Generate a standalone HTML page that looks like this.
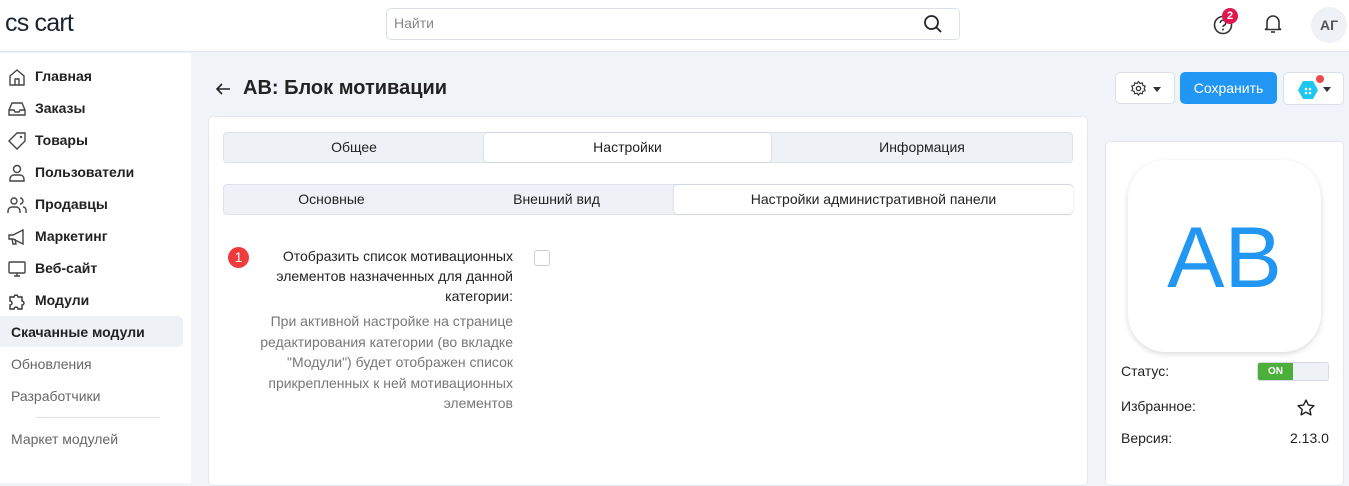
<!DOCTYPE html><html><head><meta charset="utf-8"><style>
*{box-sizing:border-box;margin:0;padding:0}
body{width:1349px;height:476px;overflow:hidden;font-family:"Liberation Sans",sans-serif;background:#f0f3f8;position:relative;color:#222}
.a{position:absolute}
.hdr{left:0;top:0;width:1349px;height:52px;background:#fff;border-bottom:1px solid #e3e7ee}
.side{left:0;top:53px;width:191px;height:430px;background:#fff}
.nav{position:absolute;left:35px;font-size:14px;font-weight:bold;color:#222}
.ic{position:absolute;left:7px;width:20px;height:20px}
.sub{position:absolute;left:11px;font-size:14px;color:#666}
.tabs{border:1px solid #dde2ea;background:#eef1f6;border-radius:4px;height:31px;font-size:14px}
.tabs div{position:absolute;top:0;height:29px;line-height:29px;text-align:center}
.tabs .on{background:#fff;border-radius:4px;box-shadow:0 0 2px rgba(0,0,0,.15)}
</style></head><body>
<div class="a hdr"></div>
<div class="a" style="left:5px;top:9px;font-size:25px;color:#1c2230;letter-spacing:-0.8px">cs cart</div>
<div class="a" style="left:386px;top:8px;width:574px;height:32px;border:1px solid #dbe0e8;border-radius:5px;background:#fff"></div>
<div class="a" style="left:394px;top:15px;font-size:14px;color:#888">Найти</div>
<svg class="a" style="left:923px;top:14px" width="20" height="20" viewBox="0 0 20 20"><circle cx="8.5" cy="8.5" r="6.5" fill="none" stroke="#222" stroke-width="1.8"/><line x1="13.5" y1="13.5" x2="18" y2="18" stroke="#222" stroke-width="1.8"/></svg>
<svg class="a" style="left:1212px;top:14px" width="22" height="22" viewBox="0 0 22 22"><circle cx="11" cy="11" r="8.5" fill="none" stroke="#333" stroke-width="1.6"/><path d="M8.3 9a2.7 2.7 0 1 1 3.5 2.5c-.6.3-.8.7-.8 1.4" fill="none" stroke="#333" stroke-width="1.6"/><circle cx="11" cy="15.5" r="1" fill="#333"/></svg>
<div class="a" style="left:1222px;top:8px;width:16px;height:16px;border-radius:8px;background:#e0174f;color:#fff;font-size:11px;font-weight:bold;text-align:center;line-height:16px">2</div>
<svg class="a" style="left:1263px;top:13px" width="20" height="22" viewBox="0 0 20 22"><path d="M4 15V9a6 6 0 0 1 12 0v6l1.5 1.5h-15z" fill="none" stroke="#333" stroke-width="1.6" stroke-linejoin="round"/><path d="M8 19h4" stroke="#333" stroke-width="1.6"/></svg>
<div class="a" style="left:1311px;top:7px;width:36px;height:36px;border-radius:18px;background:#eef1f6;color:#555;font-size:14px;font-weight:bold;text-align:center;line-height:36px">АГ</div>
<div class="a side"></div>
<svg class="ic" style="top:67px" viewBox="0 0 20 20"><path d="M3 9l7-6 7 6v9H3z M8 18v-6h4v6" fill="none" stroke="#444" stroke-width="1.4"/></svg>
<div class="nav" style="top:68px">Главная</div>
<svg class="ic" style="top:99px" viewBox="0 0 20 20"><path d="M2 11l3-7h10l3 7v5H2z M2 11h5l1 2h4l1-2h5" fill="none" stroke="#444" stroke-width="1.4"/></svg>
<div class="nav" style="top:100px">Заказы</div>
<svg class="ic" style="top:131px" viewBox="0 0 20 20"><path d="M10 2h8v8l-8 8-8-8z" fill="none" stroke="#444" stroke-width="1.4"/><circle cx="14" cy="6" r="1.2" fill="#444"/></svg>
<div class="nav" style="top:132px">Товары</div>
<svg class="ic" style="top:163px" viewBox="0 0 20 20"><circle cx="10" cy="6" r="3.5" fill="none" stroke="#444" stroke-width="1.4"/><path d="M3 18v-2a4 4 0 0 1 4-4h6a4 4 0 0 1 4 4v2z" fill="none" stroke="#444" stroke-width="1.4"/></svg>
<div class="nav" style="top:164px">Пользователи</div>
<svg class="ic" style="top:195px" viewBox="0 0 20 20"><circle cx="7" cy="6" r="3" fill="none" stroke="#444" stroke-width="1.4"/><path d="M1 18v-2a4 4 0 0 1 4-4h4a4 4 0 0 1 4 4v2M13 3a3 3 0 0 1 0 6M16 12a3 3 0 0 1 3 3v3" fill="none" stroke="#444" stroke-width="1.4"/></svg>
<div class="nav" style="top:196px">Продавцы</div>
<svg class="ic" style="top:227px" viewBox="0 0 20 20"><path d="M2 8h4l10-5v14L6 12H2z M5 12l1 5h3l-1-5" fill="none" stroke="#444" stroke-width="1.4"/></svg>
<div class="nav" style="top:228px">Маркетинг</div>
<svg class="ic" style="top:259px" viewBox="0 0 20 20"><rect x="2" y="3" width="16" height="11" rx="1" fill="none" stroke="#444" stroke-width="1.4"/><path d="M7 17h6M10 14v3" stroke="#444" stroke-width="1.4"/></svg>
<div class="nav" style="top:260px">Веб-сайт</div>
<svg class="ic" style="top:291px" viewBox="0 0 20 20"><path d="M3 6h4a2 2 0 1 1 4 0h4v4a2 2 0 1 1 0 4v4h-4a2 2 0 1 0-4 0H3v-4a2 2 0 1 0 0-4z" fill="none" stroke="#333" stroke-width="1.4"/></svg>
<div class="nav" style="top:292px">Модули</div>
<div class="a" style="left:0;top:316px;width:183px;height:31px;background:#eef1f6;border-radius:0 5px 5px 0"></div>
<div class="nav" style="left:11px;top:324px">Скачанные модули</div>
<div class="sub" style="top:356px">Обновления</div>
<div class="sub" style="top:388px">Разработчики</div>
<div class="a" style="left:36px;top:417px;width:124px;height:1px;background:#dde2ea"></div>
<div class="sub" style="top:431px">Маркет модулей</div>

<svg class="a" style="left:214px;top:80px" width="18" height="18" viewBox="0 0 18 18"><path d="M16 9H3M8 4L3 9l5 5" fill="none" stroke="#222" stroke-width="1.6"/></svg>
<div class="a" style="left:243px;top:77px;font-size:20px;font-weight:bold;color:#222">AB: Блок мотивации</div>

<div class="a" style="left:1115px;top:72px;width:60px;height:32px;background:#fff;border:1px solid #dbe0e8;border-radius:5px"></div>
<svg class="a" style="left:1130px;top:80px" width="17" height="17" viewBox="0 0 24 24"><circle cx="12" cy="12" r="3" fill="none" stroke="#333" stroke-width="1.8"/><path d="M12 2l2 3 3.5-1 .5 3.5 3.5 1-1.5 3.5 1.5 3-3.5 1-.5 3.5-3.5-1-2 3-2-3-3.5 1-.5-3.5-3.5-1 1.5-3-1.5-3.5 3.5-1L6.5 4 10 5z" fill="none" stroke="#333" stroke-width="1.6" stroke-linejoin="round"/></svg>
<div class="a" style="left:1153px;top:87px;border:4px solid transparent;border-top:5px solid #333"></div>
<div class="a" style="left:1180px;top:72px;width:97px;height:32px;background:#2196f3;border-radius:5px;color:#fff;font-size:14px;text-align:center;line-height:32px">Сохранить</div>
<div class="a" style="left:1283px;top:72px;width:61px;height:33px;background:#fff;border:1px solid #dbe0e8;border-radius:5px"></div>
<svg class="a" style="left:1297px;top:80px" width="22" height="20" viewBox="0 0 22 20"><path d="M6 1h10l5 9-5 9H6L1 10z" fill="#1ec6f2"/><circle cx="9" cy="9" r="1.3" fill="#fff"/><circle cx="13" cy="9" r="1.3" fill="#fff"/><circle cx="9" cy="13" r="1.3" fill="#fff"/><circle cx="13" cy="13" r="1.3" fill="#fff"/></svg>
<div class="a" style="left:1316px;top:75px;width:8px;height:8px;border-radius:4px;background:#ef4a4a"></div>
<div class="a" style="left:1323px;top:87px;border:4px solid transparent;border-top:5px solid #333"></div>

<div class="a" style="left:208px;top:116px;width:880px;height:370px;background:#fff;border:1px solid #e3e7ee;border-radius:5px"></div>
<div class="a tabs" style="left:223px;top:132px;width:850px">
<div style="left:0;width:260px">Общее</div>
<div class="on" style="left:260px;width:287px">Настройки</div>
<div style="left:547px;width:302px">Информация</div></div>
<div class="a tabs" style="left:223px;top:184px;width:850px">
<div style="left:0;width:215px">Основные</div>
<div style="left:215px;width:235px">Внешний вид</div>
<div class="on" style="left:450px;width:399px">Настройки административной панели</div></div>
<div class="a" style="left:228px;top:247px;width:21px;height:21px;border-radius:11px;background:#ef3b3b;color:#fff;font-size:14px;text-align:center;line-height:21px">1</div>
<div class="a" style="left:250px;top:246px;width:263px;text-align:right;font-size:14px;line-height:20px;color:#222">Отобразить список мотивационных элементов назначенных для данной категории:</div>
<div class="a" style="left:250px;top:311px;width:263px;text-align:right;font-size:14px;line-height:20.5px;color:#777">При активной настройке на странице редактирования категории (во вкладке "Модули") будет отображен список прикрепленных к ней мотивационных элементов</div>
<div class="a" style="left:534px;top:250px;width:16px;height:16px;border:1px solid #c8cdd6;border-radius:3px;background:#fff"></div>

<div class="a" style="left:1105px;top:141px;width:239px;height:345px;background:#fff;border:1px solid #e3e7ee;border-radius:5px"></div>
<div class="a" style="left:1128px;top:160px;width:193px;height:192px;border-radius:38px;background:#fff;box-shadow:0 2px 6px rgba(0,0,0,.15);color:#2196f3;font-size:86px;text-align:center;line-height:196px">AB</div>
<div class="a" style="left:1121px;top:363px;font-size:14px">Статус:</div>
<div class="a" style="left:1257px;top:362px;width:72px;height:19px;border:1px solid #d5dae2;border-radius:3px;background:#eef1f6;overflow:hidden"><div style="width:35px;height:17px;background:#4cae3b;color:#fff;font-size:10px;font-weight:bold;text-align:center;line-height:17px">ON</div></div>
<div class="a" style="left:1121px;top:398px;font-size:14px">Избранное:</div>
<svg class="a" style="left:1296px;top:398px" width="20" height="20" viewBox="0 0 24 24"><path d="M12 2.5l2.9 6 6.6.8-4.9 4.5 1.3 6.5L12 17l-5.9 3.3 1.3-6.5L2.5 9.3l6.6-.8z" fill="none" stroke="#222" stroke-width="1.7" stroke-linejoin="round"/></svg>
<div class="a" style="left:1121px;top:430px;font-size:14px">Версия:</div>
<div class="a" style="left:1290px;top:430px;font-size:14px">2.13.0</div>
</body></html>
